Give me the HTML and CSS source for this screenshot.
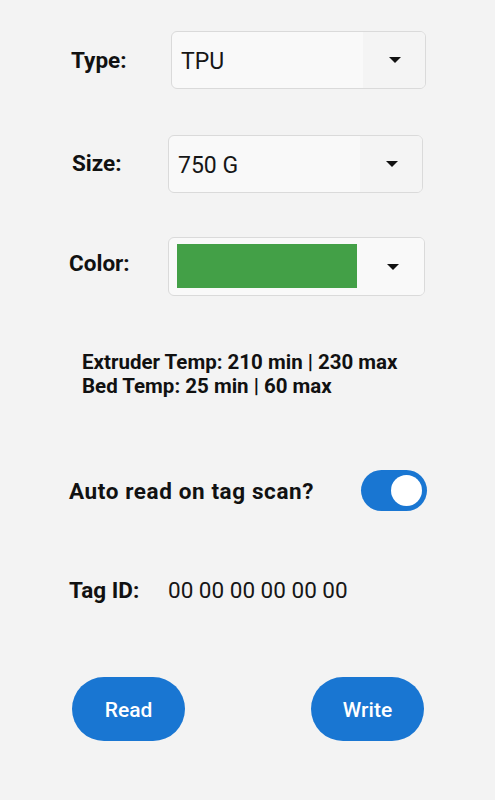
FILE: index.html
```html
<!DOCTYPE html>
<html>
<head>
<meta charset="utf-8">
<link rel="stylesheet" href="styles.css">
</head>
<body>
<div class="page">
  <div class="row row-type">
    <div class="label lbl-type">Type:</div>
    <div class="select sel-type">
      <div class="sel-value">TPU</div>
      <div class="sel-arrow"><span class="tri"></span></div>
    </div>
  </div>
  <div class="row row-size">
    <div class="label lbl-size">Size:</div>
    <div class="select sel-size">
      <div class="sel-value">750 G</div>
      <div class="sel-arrow"><span class="tri"></span></div>
    </div>
  </div>
  <div class="row row-color">
    <div class="label lbl-color">Color:</div>
    <div class="select sel-color">
      <div class="swatch-wrap"><div class="swatch"></div></div>
      <div class="sel-arrow"><span class="tri"></span></div>
    </div>
  </div>
  <div class="temps">
    <div>Extruder Temp: 210 min | 230 max</div>
    <div>Bed Temp: 25 min | 60 max</div>
  </div>
  <div class="auto-row">
    <div class="label auto-label">Auto read on tag scan?</div>
    <div class="toggle"><div class="thumb"></div></div>
  </div>
  <div class="tag-row">
    <div class="label tag-label">Tag ID:</div>
    <div class="tag-value">00 00 00 00 00 00</div>
  </div>
  <div class="buttons">
    <button class="btn">Read</button>
    <button class="btn">Write</button>
  </div>
</div>
</body>
</html>
```

FILE: styles.css
```css
html, body {
  margin: 0;
  padding: 0;
  background: #f3f3f3;
}
body {
  font-family: Roboto, "Noto Sans", "Liberation Sans", sans-serif;
  color: #111;
  width: 495px;
  height: 800px;
  overflow: hidden;
}
.page {
  display: flex;
  flex-direction: column;
  padding-top: 31px;
}
.row {
  display: flex;
  align-items: center;
}
.label {
  font-weight: 700;
  font-size: 22.5px;
}
.row-type { padding-left: 71px; }
.lbl-type { width: 100px; }
.row-size { padding-left: 72px; margin-top: 46px; }
.lbl-size { width: 96px; margin-top: -2px; }
.row-color { padding-left: 69px; margin-top: 44px; }
.lbl-color { width: 99px; margin-top: -8px; }

.select {
  display: flex;
  height: 56px;
  border: 1px solid #dadada;
  border-radius: 6px;
  background: #f9f9f9;
  overflow: hidden;
  box-sizing: content-box;
}
.sel-type { width: 253px; }
.sel-size { width: 253px; }
.sel-color { width: 255px; height: 57px; }
.sel-value {
  flex: 1;
  display: flex;
  align-items: center;
  padding-left: 9px;
  padding-top: 2px;
  font-size: 23px;
  color: #161616;
}
.sel-arrow {
  width: 62px;
  background: #f4f4f4;
  display: flex;
  align-items: center;
  justify-content: center;
}
.sel-color .sel-arrow { background: #f9f9f9; width: 64px; }
.tri {
  width: 0;
  height: 0;
  border-left: 6.5px solid transparent;
  border-right: 6.5px solid transparent;
  border-top: 6px solid #111;
  margin-left: 2px;
}
.swatch-wrap {
  flex: 1;
  padding: 6px 0 8px 8px;
  display: flex;
}
.swatch {
  width: 180px;
  height: 44px;
  background: #43a047;
}

.temps {
  margin-top: 54px;
  padding-left: 82px;
  font-weight: 700;
  font-size: 20.5px;
  line-height: 24px;
}

.auto-row {
  margin-top: 72px;
  padding-left: 69px;
  padding-right: 68px;
  display: flex;
  align-items: center;
  justify-content: space-between;
}
.auto-label { letter-spacing: 0.6px; }
.toggle {
  width: 66px;
  height: 41px;
  border-radius: 21px;
  background: #1976d2;
  position: relative;
}
.thumb {
  position: absolute;
  width: 31px;
  height: 31px;
  border-radius: 50%;
  background: #fff;
  top: 5px;
  right: 5px;
}

.tag-row {
  margin-top: 67px;
  padding-left: 69px;
  display: flex;
  align-items: center;
  height: 24px;
}
.tag-label { width: 99px; }
.tag-value {
  font-size: 22.5px;
  color: #161616;
}

.buttons {
  margin-top: 75px;
  padding-left: 72px;
  padding-right: 71px;
  display: flex;
  justify-content: space-between;
}
.btn {
  width: 113px;
  height: 64px;
  border: none;
  border-radius: 32px;
  background: #1976d2;
  color: #fff;
  font-family: Roboto, "Noto Sans", sans-serif;
  font-weight: 500;
  font-size: 21px;
  padding: 1px 0 0 0;
  line-height: 62px;
}
```
